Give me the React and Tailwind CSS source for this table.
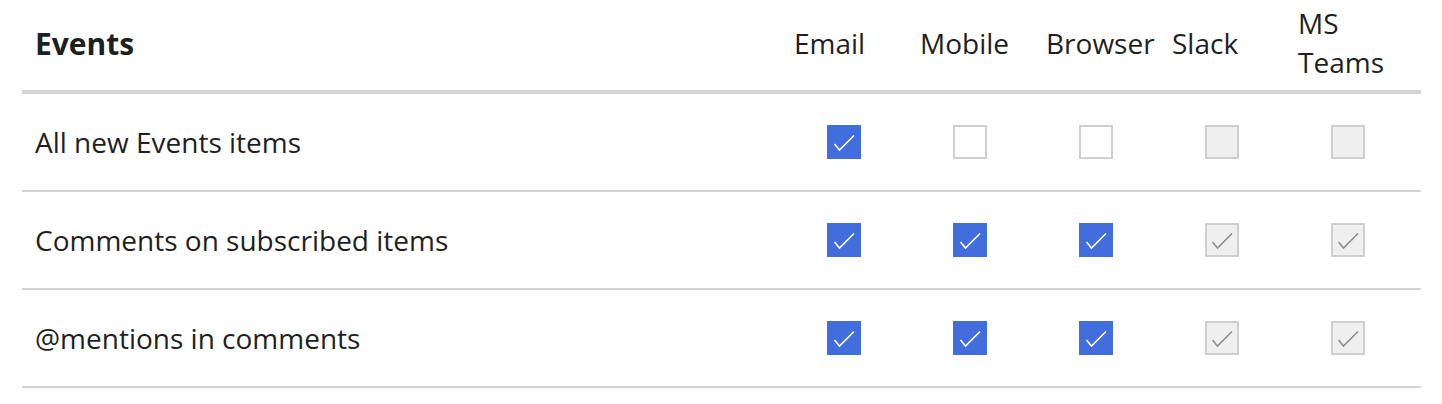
import React from "react";

const channels = ["Email", "Mobile", "Browser", "Slack", "MS Teams"];

const rows = [
  { label: "All new Events items", values: ["on", "off", "off", "disabled", "disabled"] },
  { label: "Comments on subscribed items", values: ["on", "on", "on", "disabledOn", "disabledOn"] },
  { label: "@mentions in comments", values: ["on", "on", "on", "disabledOn", "disabledOn"] },
];

function Check({ color }) {
  return (
    <svg width="34" height="34" viewBox="0 0 34 34" className="block">
      <path d="M7.5 19 L12.5 25 L27 10.5" fill="none" stroke={color} strokeWidth="1.6" />
    </svg>
  );
}

function Box({ state }) {
  if (state === "on") {
    return (
      <div className="w-[34px] h-[34px] bg-[#416ddd]">
        <Check color="#ffffff" />
      </div>
    );
  }
  if (state === "off") {
    return <div className="w-[34px] h-[34px] bg-white border-2 border-[#cfcfcf]" />;
  }
  return (
    <div className="w-[34px] h-[34px] bg-[#efefef] border-2 border-[#cfcfcf] relative">
      {state === "disabledOn" && (
        <div className="absolute -top-[2px] -left-[2px]">
          <Check color="#8f8f8f" />
        </div>
      )}
    </div>
  );
}

export default function App() {
  return (
    <div
      className="w-[1442px] h-[404px] bg-white text-[#1f1f1f] px-[22px]"
      style={{ fontFamily: '"Open Sans", "Liberation Sans", sans-serif' }}
    >
      <div className="w-[1399px]">
        <div className="flex items-center h-[94px] pb-[4px] border-b-4 border-[#d4d4d4]">
          <div className="flex-1 pl-[13px] text-[30px] font-bold">Events</div>
          {channels.map((c) => (
            <div key={c} className="w-[126px] pl-[3px] text-[28px] leading-[39px]">
              {c === "MS Teams" ? (
                <>
                  <div>MS</div>
                  <div>Teams</div>
                </>
              ) : (
                c
              )}
            </div>
          ))}
        </div>
        {rows.map((r) => (
          <div key={r.label} className="flex items-center h-[98px] border-b-2 border-[#d4d4d4]">
            <div className="flex-1 pl-[13px] text-[28px]">{r.label}</div>
            {r.values.map((v, i) => (
              <div key={i} className="w-[126px] pl-[36px]">
                <Box state={v} />
              </div>
            ))}
          </div>
        ))}
      </div>
    </div>
  );
}
